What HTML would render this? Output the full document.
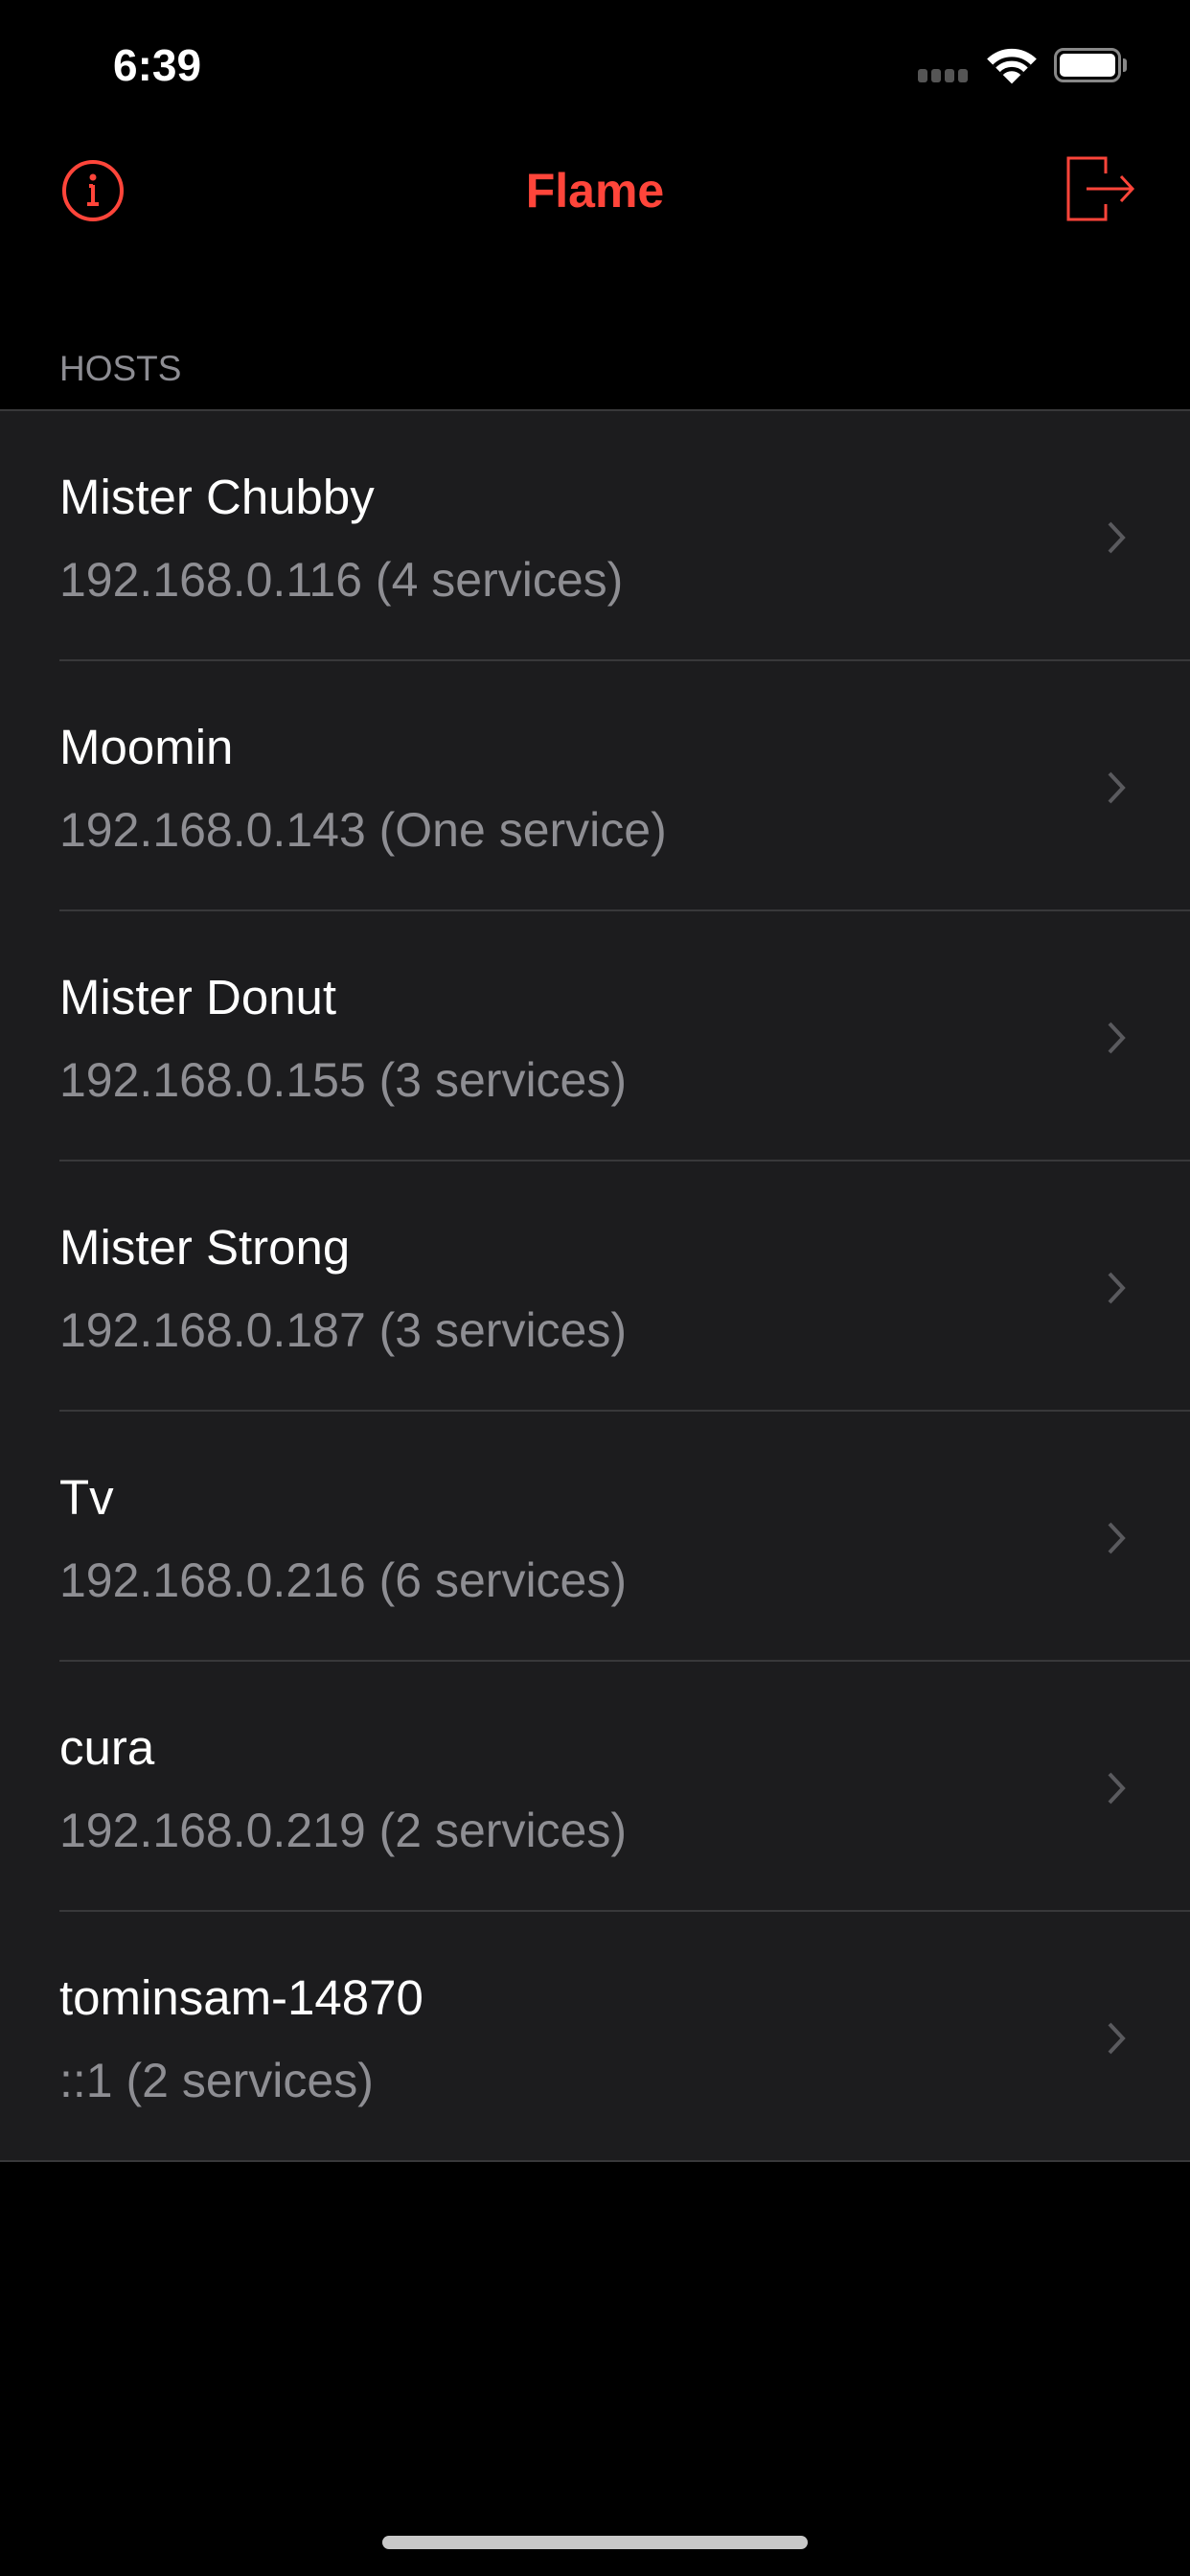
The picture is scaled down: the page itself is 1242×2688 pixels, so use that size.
<!DOCTYPE html>
<html><head><meta charset="utf-8"><style>
*{margin:0;padding:0;box-sizing:border-box}
body{width:1242px;height:2688px;background:#000;font-family:"Liberation Sans",sans-serif;position:relative;overflow:hidden;color:#fff}
.abs{position:absolute}
.row{position:absolute;left:0;width:1242px;height:261px;background:#1c1c1e}
.t{position:absolute;left:62px;top:61px;font-size:51px;line-height:58px;color:#fff}
.s{position:absolute;left:62px;top:147px;font-size:50px;line-height:58px;color:#8e8e93}
.sep{position:absolute;left:62px;right:0;bottom:0;height:2px;background:#38383a}
.chev{position:absolute;left:1152px;top:112px}
</style></head><body>
<div class="abs" style="left:118px;top:40px;font-size:46px;font-weight:bold;line-height:56px">6:39</div>
<div class="abs" style="left:958px;top:72px;width:53px;height:14px;display:flex;gap:4px">
<span style="width:10px;height:14px;border-radius:3px;background:#555"></span><span style="width:10px;height:14px;border-radius:3px;background:#555"></span><span style="width:10px;height:14px;border-radius:3px;background:#555"></span><span style="width:10px;height:14px;border-radius:3px;background:#555"></span></div>
<svg class="abs" style="left:1028px;top:46px" width="56" height="44" viewBox="0 0 52 40"><path d="M26 38 L2 14 A34 34 0 0 1 50 14 Z" fill="#fff"/><path d="M9 21 A24 24 0 0 1 43 21" stroke="#000" stroke-width="4" fill="none"/><path d="M16 28 A14 14 0 0 1 36 28" stroke="#000" stroke-width="4" fill="none"/></svg>
<div class="abs" style="left:1100px;top:50px;width:70px;height:36px;border:3px solid #888;border-radius:10px;padding:3px"><div style="width:100%;height:100%;background:#fff;border-radius:5px"></div></div>
<div class="abs" style="left:1172px;top:61px;width:4px;height:14px;background:#888;border-radius:0 3px 3px 0"></div>
<svg class="abs" style="left:64px;top:166px" width="66" height="66" viewBox="0 0 66 66"><circle cx="33" cy="33" r="30" stroke="#ff453a" stroke-width="4" fill="none"/><circle cx="33" cy="19" r="3.5" fill="#ff453a"/><path d="M33 27 V47 M27 47 H39 M29 28 H33" stroke="#ff453a" stroke-width="4" fill="none"/></svg>
<div class="abs" style="left:0;width:1242px;top:168px;text-align:center;font-size:50px;font-weight:bold;color:#ff453a;line-height:62px">Flame</div>
<svg class="abs" style="left:1112px;top:162px" width="74" height="70" viewBox="0 0 74 70"><path d="M42 19 V3 H3 V67 H42 V51" stroke="#ff453a" stroke-width="3" fill="none"/><path d="M22 35 H70 M58 22 L70 35 L58 48" stroke="#ff453a" stroke-width="3" fill="none"/></svg>
<div class="abs" style="left:62px;top:362px;font-size:37px;color:#8d8d93;line-height:46px">HOSTS</div>
<div class="abs" style="left:0;top:427px;width:1242px;height:2px;background:#38383a"></div>
<div class="row" style="top:429px"><div class="t">Mister Chubby</div><div class="s">192.168.0.116 (4 services)</div><svg class="chev" width="26" height="40" viewBox="0 0 26 40"><path d="M6 5 L20 20 L6 35" stroke="#5a5a5e" stroke-width="4" fill="none"/></svg><div class="sep"></div></div>
<div class="row" style="top:690px"><div class="t">Moomin</div><div class="s">192.168.0.143 (One service)</div><svg class="chev" width="26" height="40" viewBox="0 0 26 40"><path d="M6 5 L20 20 L6 35" stroke="#5a5a5e" stroke-width="4" fill="none"/></svg><div class="sep"></div></div>
<div class="row" style="top:951px"><div class="t">Mister Donut</div><div class="s">192.168.0.155 (3 services)</div><svg class="chev" width="26" height="40" viewBox="0 0 26 40"><path d="M6 5 L20 20 L6 35" stroke="#5a5a5e" stroke-width="4" fill="none"/></svg><div class="sep"></div></div>
<div class="row" style="top:1212px"><div class="t">Mister Strong</div><div class="s">192.168.0.187 (3 services)</div><svg class="chev" width="26" height="40" viewBox="0 0 26 40"><path d="M6 5 L20 20 L6 35" stroke="#5a5a5e" stroke-width="4" fill="none"/></svg><div class="sep"></div></div>
<div class="row" style="top:1473px"><div class="t">Tv</div><div class="s">192.168.0.216 (6 services)</div><svg class="chev" width="26" height="40" viewBox="0 0 26 40"><path d="M6 5 L20 20 L6 35" stroke="#5a5a5e" stroke-width="4" fill="none"/></svg><div class="sep"></div></div>
<div class="row" style="top:1734px"><div class="t">cura</div><div class="s">192.168.0.219 (2 services)</div><svg class="chev" width="26" height="40" viewBox="0 0 26 40"><path d="M6 5 L20 20 L6 35" stroke="#5a5a5e" stroke-width="4" fill="none"/></svg><div class="sep"></div></div>
<div class="row" style="top:1995px"><div class="t">tominsam-14870</div><div class="s">::1 (2 services)</div><svg class="chev" width="26" height="40" viewBox="0 0 26 40"><path d="M6 5 L20 20 L6 35" stroke="#5a5a5e" stroke-width="4" fill="none"/></svg></div>
<div class="abs" style="left:0;top:2254px;width:1242px;height:2px;background:#38383a"></div>
<div class="abs" style="left:399px;top:2646px;width:444px;height:14px;border-radius:7px;background:#c8c8c8"></div>
</body></html>
